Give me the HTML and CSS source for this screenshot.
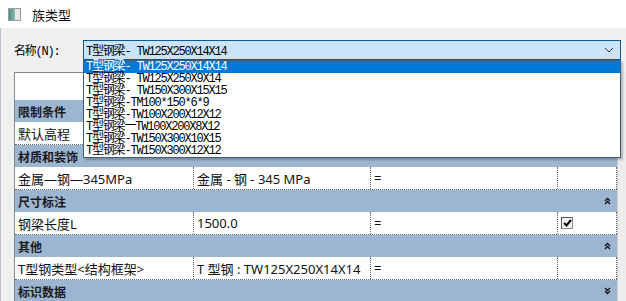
FILE: index.html
```
<!DOCTYPE html>
<html lang="zh-CN">
  <head>
    <meta charset="UTF-8" />
    <title>族类型</title>
    <link rel="stylesheet" href="styles.css">
  </head>
  <body>
    <div class="window">
      <div class="titlebar">
        <span class="app-icon"></span>
        <span class="title">族类型</span>
      </div>

      <div class="content">
        <div class="type-row">
          <label class="type-label">名称(N):</label>
          <div class="combo">
            <span class="combo-text">T型钢梁- TW125X250X14X14</span>
            <svg class="combo-arrow" width="10" height="6" viewBox="0 0 10 6">
              <path d="M1 1 L5 5 L9 1" fill="none" stroke="#333" stroke-width="1" />
            </svg>
          </div>
          <ul class="dropdown">
            <li class="selected">T型钢梁- TW125X250X14X14</li>
            <li>T型钢梁- TW125X250X9X14</li>
            <li>T型钢梁- TW150X300X15X15</li>
            <li>T型钢梁-TM100*150*6*9</li>
            <li>T型钢梁-TW100X200X12X12</li>
            <li>T型钢梁一TW100X200X8X12</li>
            <li>T型钢梁-TW150X300X10X15</li>
            <li>T型钢梁-TW150X300X12X12</li>
          </ul>
        </div>

        <div class="grid-wrap">
          <div class="grid">
            <div class="grid-head"></div>

            <div class="section">限制条件</div>
            <div class="row">
              <div class="cell c1">默认高程</div>
              <div class="cell c2"></div>
              <div class="cell c3"></div>
              <div class="cell c4"></div>
            </div>

            <div class="section">材质和装饰</div>
            <div class="row">
              <div class="cell c1">金属—钢—345MPa</div>
              <div class="cell c2">金属 - 钢 - 345 MPa</div>
              <div class="cell c3">=</div>
              <div class="cell c4"></div>
            </div>

            <div class="section">尺寸标注
              <svg class="fold" width="7" height="8" viewBox="0 0 7 8"><path d="M1 4 L3.5 1.5 L6 4 M1 7 L3.5 4.5 L6 7" fill="none" stroke="#111" stroke-width="1.3" /></svg>
            </div>
            <div class="row">
              <div class="cell c1">钢梁长度L</div>
              <div class="cell c2">1500.0</div>
              <div class="cell c3">=</div>
              <div class="cell c4"><span class="check">
                <svg width="9" height="8" viewBox="0 0 9 8"><path d="M1 4 L3.5 6.5 L8 1" fill="none" stroke="#000" stroke-width="2" /></svg>
              </span></div>
            </div>

            <div class="section">其他
              <svg class="fold" width="7" height="8" viewBox="0 0 7 8"><path d="M1 4 L3.5 1.5 L6 4 M1 7 L3.5 4.5 L6 7" fill="none" stroke="#111" stroke-width="1.3" /></svg>
            </div>
            <div class="row">
              <div class="cell c1">T型钢类型&lt;结构框架&gt;</div>
              <div class="cell c2">T 型钢 : TW125X250X14X14</div>
              <div class="cell c3">=</div>
              <div class="cell c4"></div>
            </div>

            <div class="section">标识数据
              <svg class="fold" width="7" height="8" viewBox="0 0 7 8"><path d="M1 1 L3.5 3.5 L6 1 M1 4 L3.5 6.5 L6 4" fill="none" stroke="#111" stroke-width="1.3" /></svg>
            </div>
          </div>
          <div class="scroll-strip"></div>
        </div>
      </div>
    </div>
  </body>
</html>
```

FILE: styles.css
```
html,
body {
  margin: 0;
  padding: 0;
  width: 626px;
  height: 301px;
  overflow: hidden;
  background-color: #f0f0f0;
}

.window {
  display: flex;
  flex-direction: column;
  height: 301px;
  font-family: "Noto Sans CJK SC", sans-serif;
  font-size: 12px;
  color: #000;
}

/* Title bar */
.titlebar {
  display: flex;
  align-items: center;
  height: 28px;
  background-color: #fff;
  padding-left: 8px;
  flex-shrink: 0;
}

.app-icon {
  width: 11px;
  height: 11px;
  border: 1px solid #9a9a9a;
  background: linear-gradient(90deg, #4c8c8a 0%, #8dbfa9 55%, #e8e8e8 56%, #e8e8e8 100%);
  margin-right: 11px;
}

.title {
  font-size: 13px;
  color: #111;
}

.content {
  display: flex;
  flex-direction: column;
  flex: 1;
  min-height: 0;
  border-left: 1px solid #b8c4d0;
  padding: 12px 0 0 13px;
}

/* Type selector */
.type-row {
  position: relative;
  display: flex;
  align-items: center;
  height: 20px;
  flex-shrink: 0;
}

.type-label {
  width: 69px;
  font-family: "Liberation Mono", "Noto Sans CJK SC", monospace;
  font-size: 12px;
  letter-spacing: -1.2px;
  color: #000;
}

.combo {
  display: flex;
  align-items: center;
  justify-content: space-between;
  width: 528px;
  height: 18px;
  border: 1px solid #0a5a9c;
  background-color: #cce4f7;
  padding: 0 6px 0 2px;
  box-sizing: content-box;
}

.combo-text,
.dropdown li {
  font-family: "Liberation Mono", "Noto Sans CJK SC", monospace;
  font-size: 12px;
  letter-spacing: -1.2px;
  white-space: nowrap;
}

.combo-arrow {
  display: block;
}

.dropdown {
  position: absolute;
  left: 69px;
  top: 20px;
  width: 536px;
  margin: 0;
  padding: 0;
  list-style: none;
  background-color: #fff;
  border: 1px solid #3f5e7d;
  box-shadow: 2px 2px 2px rgba(0, 0, 0, 0.25);
  z-index: 2;
}

.dropdown li {
  height: 12px;
  line-height: 12px;
  padding-left: 2px;
  color: #000;
}

.dropdown li.selected {
  background-color: #0078d7;
  color: #fff;
}

/* Property grid */
.grid-wrap {
  display: flex;
  flex: 1;
  min-height: 0;
  margin-top: 12px;
  overflow: hidden;
}

.grid {
  width: 603px;
  border-top: 1px solid #828790;
  border-left: 1px solid #828790;
  font-family: "Noto Sans", "Noto Sans CJK SC", sans-serif;
  font-size: 13px;
}

.grid-head {
  height: 27px;
  background-color: #fff;
}

.section {
  display: flex;
  align-items: center;
  justify-content: space-between;
  height: 22px;
  padding: 0 6px 0 3px;
  background-color: #9cb5d1;
  font-family: "Noto Sans CJK SC", sans-serif;
  font-weight: bold;
  font-size: 12px;
  color: #1a1a1a;
}

.fold {
  display: block;
}

.row {
  display: flex;
  height: 22px;
  background-color: #fff;
  border-bottom: 1px dotted #666;
}

.cell {
  display: flex;
  align-items: center;
  padding-left: 3px;
  white-space: nowrap;
  overflow: hidden;
  color: #111;
}

.c1 {
  width: 175px;
  border-right: 1px dotted #666;
}

.c2 {
  width: 173px;
  border-right: 1px dotted #666;
}

.c3 {
  width: 183px;
  border-right: 1px dotted #666;
}

.c4 {
  flex: 1;
  padding-left: 3px;
  border-right: 1px dotted #666;
}

.check {
  display: flex;
  align-items: center;
  justify-content: center;
  width: 10px;
  height: 10px;
  border: 1px solid #8a8a8a;
  border-top-color: #555;
  border-left-color: #555;
  background-color: #f4f4f4;
}

.scroll-strip {
  width: 8px;
  border-left: 1px solid #d0d0d0;
  background-color: #ececec;
}
```
